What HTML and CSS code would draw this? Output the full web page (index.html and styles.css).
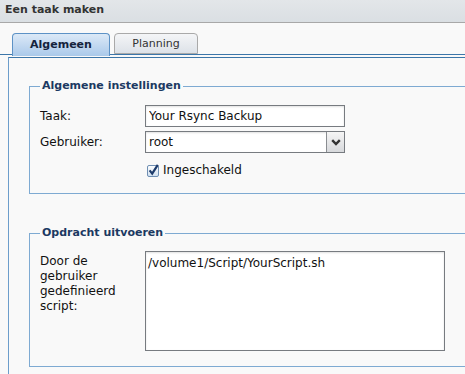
FILE: index.html
```html
<!DOCTYPE html>
<html lang="nl">
<head>
  <meta charset="UTF-8">
  <title>Een taak maken</title>
  <meta name="viewport" content="width=device-width, initial-scale=1.0">
  <link rel="stylesheet" href="styles.css">
</head>
<body>
  <div class="titlebar">Een taak maken</div>

  <div class="tabs">
    <div class="tab active">Algemeen</div>
    <div class="tab">Planning</div>
  </div>

  <div class="panel">
    <fieldset class="group">
      <legend>Algemene instellingen</legend>
      <div class="row">
        <label>Taak:</label>
        <input class="field" type="text" value="Your Rsync Backup">
      </div>
      <div class="row">
        <label>Gebruiker:</label>
        <div class="select">
          <span class="select-value">root</span>
          <span class="select-btn">
            <svg width="10" height="7" viewBox="0 0 10 7"><path d="M1.2 1.2 L5 5 L8.8 1.2" fill="none" stroke="#333" stroke-width="2.4"/></svg>
          </span>
        </div>
      </div>
      <div class="row check-row">
        <span></span>
        <label class="check">
          <svg width="14" height="14" viewBox="0 0 14 14">
            <defs>
              <linearGradient id="cb" x1="0" y1="0" x2="0" y2="1">
                <stop offset="0" stop-color="#ffffff"/>
                <stop offset="1" stop-color="#cfdff0"/>
              </linearGradient>
            </defs>
            <rect x="1.5" y="2.5" width="11" height="11" rx="1.5" fill="url(#cb)" stroke="#6f8fb3"/>
            <path d="M3.6 7.4 L6.2 10.6 L11.8 1.8" fill="none" stroke="#1d3b6b" stroke-width="2.2"/>
          </svg>
          Ingeschakeld
        </label>
      </div>
    </fieldset>

    <fieldset class="group second">
      <legend>Opdracht uitvoeren</legend>
      <div class="row top">
        <label class="multi">Door de gebruiker gedefinieerd script:</label>
        <textarea class="area">/volume1/Script/YourScript.sh</textarea>
      </div>
    </fieldset>
  </div>
</body>
</html>
```

FILE: styles.css
```css
html, body {
  overflow: hidden;
}
body {
  margin: 0;
  background: #f9f9f9;
  font-family: "DejaVu Sans", Verdana, sans-serif;
  font-size: 12px;
  color: #111;
  width: 465px;
  height: 374px;
}
.titlebar {
  height: 22px;
  line-height: 20px;
  padding-left: 5px;
  background: linear-gradient(#e3e6e9, #dadfe3);
  border-bottom: 1px solid #a8a8a8;
  font-size: 11px;
  font-weight: bold;
  color: #333;
}
.tabs {
  display: flex;
  gap: 4px;
  margin-top: 10px;
  padding-left: 12px;
  height: 21px;
  border-bottom: 1px solid #3c76a9;
}
.tab {
  width: 82px;
  height: 19px;
  line-height: 19px;
  text-align: center;
  font-size: 11px;
  color: #333;
  border: 1px solid #a9a9a9;
  border-radius: 4px 4px 0 0;
  background: linear-gradient(#f4f5f7, #dde2e8);
}
.tab.active {
  width: 96px;
  height: 22px;
  line-height: 21px;
  font-weight: bold;
  color: #14233d;
  border-color: #5d92c6;
  border-bottom: none;
  background: linear-gradient(#dce9f7, #aac9ea);
}
.panel {
  margin: 2px 0 0 8px;
  padding: 21px 0 0 20px;
  border-top: 1px solid #3c76a9;
  border-left: 1px solid #6c9dcb;
  height: 295px;
  overflow: hidden;
}
.group {
  margin: 0 -60px 0 0;
  padding: 12px 10px 14px;
  border: 1px solid #7eaad2;
}
.group.second {
  margin-top: 32px;
  padding-top: 11px;
  padding-bottom: 15px;
}
.group legend {
  padding: 0 2px;
  line-height: 14px;
  font-size: 11px;
  font-weight: bold;
  color: #1c3962;
}
.row {
  display: grid;
  grid-template-columns: 105px 200px;
  align-items: center;
  margin-bottom: 4px;
}
.row.top {
  grid-template-columns: 105px 300px;
  align-items: start;
  margin-bottom: 0;
}
.check-row {
  margin: 8px 0 0;
  height: 18px;
}
.field {
  box-sizing: border-box;
  height: 22px;
  margin: 0;
  padding: 0 3px;
  border: 1px solid #777b80;
  background: #fff;
  box-shadow: inset 0 1px 2px rgba(0,0,0,0.12);
  font: 12px "DejaVu Sans", Verdana, sans-serif;
  color: #111;
}
.select {
  display: flex;
  height: 22px;
  box-sizing: border-box;
  border: 1px solid #777b80;
  background: #fff;
  box-shadow: inset 0 1px 2px rgba(0,0,0,0.12);
}
.select-value {
  flex: 1;
  padding-left: 3px;
  line-height: 20px;
}
.select-btn {
  width: 17px;
  display: flex;
  align-items: center;
  justify-content: center;
  border-left: 1px solid #8a8d91;
  background: linear-gradient(#f5f5f5, #d7d9dc);
}
.check {
  display: flex;
  align-items: center;
  gap: 3px;
  margin-left: 1px;
}
.multi {
  line-height: 15px;
  margin-top: 3px;
  width: 90px;
}
.area {
  box-sizing: border-box;
  height: 100px;
  margin: 0;
  padding: 4px 2px;
  border: 1px solid #777b80;
  background: #fff;
  box-shadow: inset 0 1px 2px rgba(0,0,0,0.12);
  resize: none;
  font: 12px/15px "DejaVu Sans", Verdana, sans-serif;
  color: #111;
}
```
